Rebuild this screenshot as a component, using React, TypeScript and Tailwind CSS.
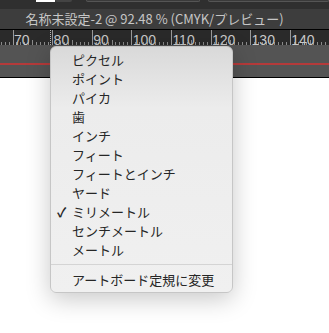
import React from 'react';

const units = ['ピクセル', 'ポイント', 'パイカ', '歯', 'インチ', 'フィート', 'フィートとインチ', 'ヤード', 'ミリメートル', 'センチメートル', 'メートル'];
const rulerLabels = ['70', '80', '90', '100', '110', '120', '130', '140'];

const font = { fontFamily: '"Noto Sans CJK JP", "Noto Sans", sans-serif' };

function Ruler() {
  const step = 39.6;
  const start = 12.5;
  const ticks: React.ReactNode[] = [];
  for (let i = -1; i < 9; i++) {
    const x0 = Math.round(start + i * step) + 0.5;
    ticks.push(<line key={`M${i}`} x1={x0} x2={x0} y1={0} y2={15} stroke="#9a9a9a" strokeWidth={1} />);
    for (let j = 1; j < 10; j++) {
      const x = Math.round(start + i * step + (j * step) / 10) + 0.5;
      const h = j === 5 ? 5 : 3;
      ticks.push(<line key={`m${i}-${j}`} x1={x} x2={x} y1={15 - h} y2={15} stroke="#8a8a8a" strokeWidth={1} />);
    }
  }
  return (
    <div className="relative h-[16px] border-t border-black bg-[#2a2a2a]">
      <svg className="absolute inset-0" width={329} height={15}>
        {ticks}
        <line x1={50.5} x2={50.5} y1={0} y2={15} stroke="#bbbbbb" strokeDasharray="1 1" />
      </svg>
      <div className="absolute left-[14px] top-[3px] flex text-[14px] leading-[14px] text-[#c8c8c8]" style={{ fontFamily: '"Liberation Sans", sans-serif' }}>
        {rulerLabels.map((l) => (
          <span key={l} className="w-[39.6px]">{l}</span>
        ))}
      </div>
    </div>
  );
}

export default function App() {
  return (
    <div className="relative h-[333px] w-[329px] overflow-hidden bg-white" style={font}>
      <div className="flex h-[9px] items-start bg-[#2f2f2f]">
        <div className="ml-[36px] h-[2px] w-[19px] bg-white" />
        <div className="h-[2px] w-[17px] rounded-b-sm bg-[#444]" />
        <div className="ml-[14px] h-[2px] w-[114px] rounded-b-sm border border-t-0 border-[#555] bg-[#3a3a3a]" />
        <div className="ml-[8px] h-[2px] w-[121px] rounded-b-sm border border-t-0 border-[#555] bg-[#3a3a3a]" />
      </div>
      <div className="flex h-[20px] items-center justify-center bg-[#3d3d3d] pr-[20px] text-[13px] text-[#c6c6c6]">
        名称未設定-2 @ 92.48 % (CMYK/プレビュー)
      </div>
      <Ruler />
      <div className="flex h-[32px] flex-col bg-[#545454] pt-[18px]">
        <div className="h-[2px] bg-[#b53a3a]" />
      </div>
      <div className="h-px bg-black" />

      <div className="absolute left-[50px] top-[46px] w-[183px] rounded-[6px] border border-[#c6c6c6] bg-linear-to-b from-[#d9d9d9] via-[#ececec] via-25% to-[#f0f0f0] pb-[3px] pt-[3px] text-[13px] text-[#262626] shadow-[0_6px_24px_rgba(0,0,0,0.22)]">
        {units.map((u) => (
          <div key={u} className="flex h-[19px] items-center">
            <span className="w-[21px] pl-[6px] text-[13px] font-bold">{u === 'ミリメートル' ? '✓' : ''}</span>
            <span>{u}</span>
          </div>
        ))}
        <div className="my-[5px] h-px bg-[#d4d4d4]" />
        <div className="flex h-[19px] items-center pl-[21px]">アートボード定規に変更</div>
      </div>
    </div>
  );
}
